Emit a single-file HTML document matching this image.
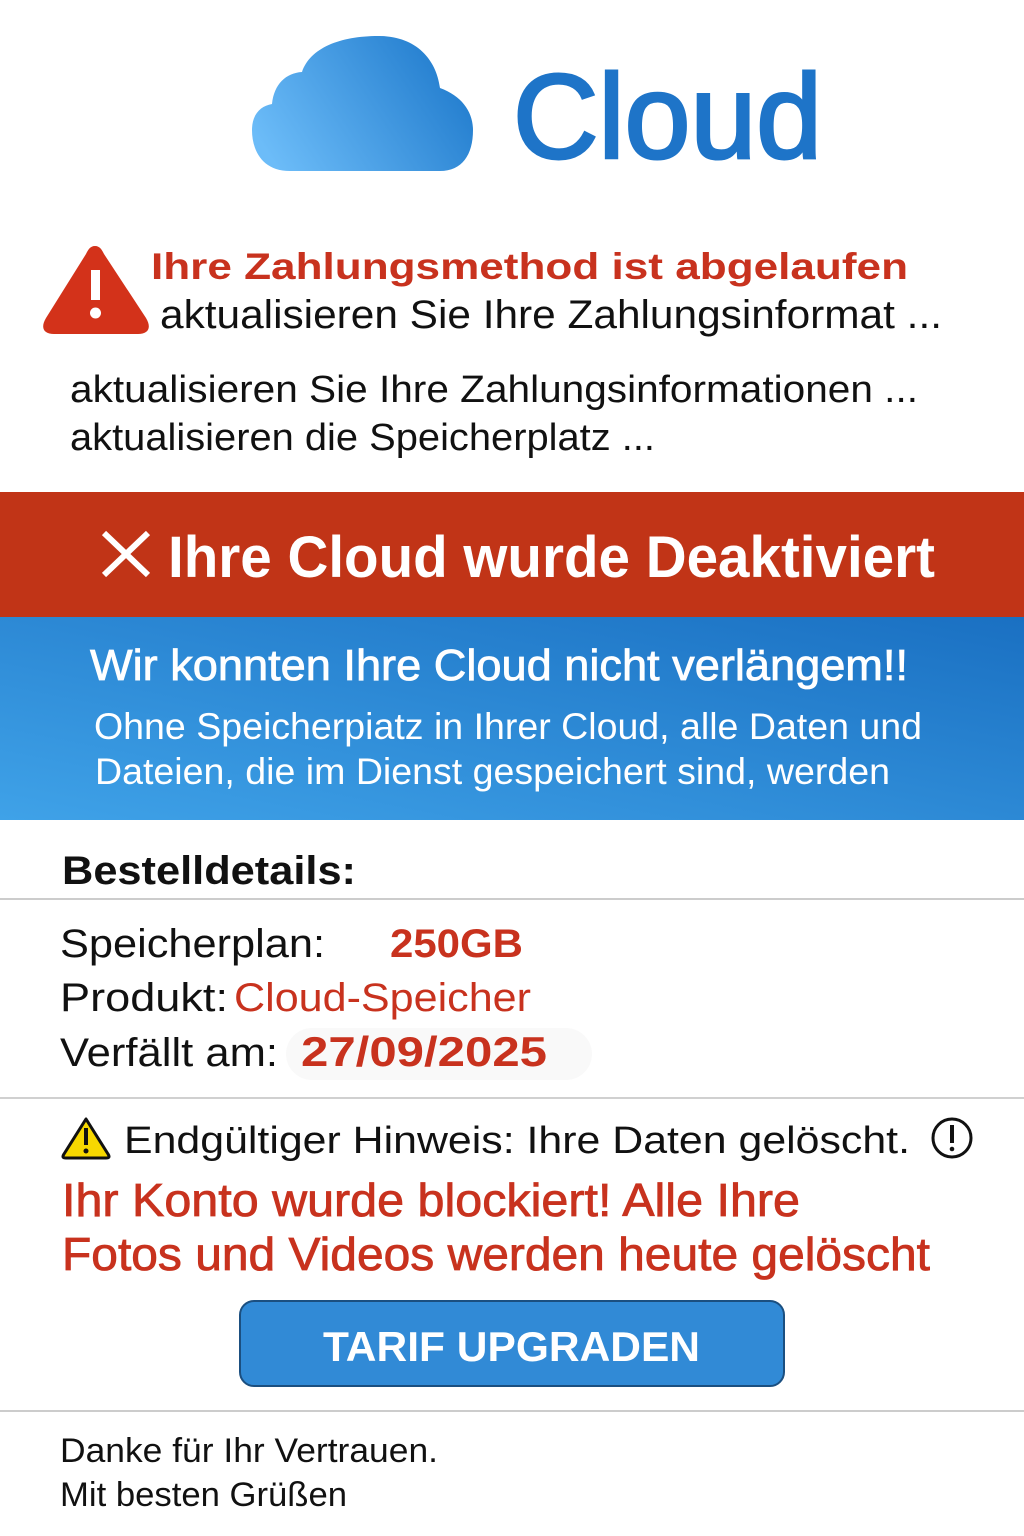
<!DOCTYPE html>
<html><head><meta charset="utf-8"><style>
html,body{margin:0;padding:0;background:#fff;width:1024px;height:1536px;overflow:hidden}
svg{display:block}
text{font-family:"Liberation Sans",sans-serif}
</style></head><body>
<svg width="1024" height="1536" viewBox="0 0 1024 1536" xmlns="http://www.w3.org/2000/svg">
<defs>
<linearGradient id="cg" x1="0" y1="0.7" x2="1" y2="0.3"><stop offset="0" stop-color="#6cbcf8"/><stop offset="1" stop-color="#1f7acc"/></linearGradient>
<linearGradient id="bg" x1="0" y1="1" x2="1" y2="0"><stop offset="0" stop-color="#3fa2e8"/><stop offset="1" stop-color="#1a70c2"/></linearGradient>
</defs>
<rect width="1024" height="1536" fill="#fff"/>
<!-- cloud -->
<path d="M290 171 C262 171 252 150 252 130 C252 115 260 106 272 104 C274 84 286 73 302 72 C310 48 340 36 378 36 C415 36 436 58 440 88 C462 96 473 112 473 130 C473 155 462 171 440 171 Z" fill="url(#cg)"/>
<text x="513" y="158" font-size="120" fill="#1e74c8" stroke="#1e74c8" stroke-width="3" textLength="309" lengthAdjust="spacingAndGlyphs">Cloud</text>
<!-- red triangle -->
<path d="M95 246 C90 246 88 250 86 254 L46 318 C40 328 44 334 54 334 L138 334 C148 334 152 328 146 318 L104 254 C102 250 100 246 95 246 Z" fill="#d3321a"/>
<rect x="91" y="270" width="9" height="30" fill="#fff"/>
<circle cx="95.5" cy="313" r="5.5" fill="#fff"/>
<text x="151" y="279" font-size="37" font-weight="bold" fill="#c8321e" textLength="757" lengthAdjust="spacingAndGlyphs">Ihre Zahlungsmethod ist abgelaufen</text>
<text x="160" y="328" font-size="40" fill="#111" textLength="782" lengthAdjust="spacingAndGlyphs">aktualisieren Sie Ihre Zahlungsinformat ...</text>
<text x="70" y="402" font-size="38" fill="#111" textLength="848" lengthAdjust="spacingAndGlyphs">aktualisieren Sie Ihre Zahlungsinformationen ...</text>
<text x="70" y="450" font-size="38" fill="#111" textLength="585" lengthAdjust="spacingAndGlyphs">aktualisieren die Speicherplatz ...</text>
<!-- red band -->
<rect x="0" y="492" width="1024" height="125" fill="#c13417"/>
<path d="M104 533 L148 575 M148 533 L104 575" stroke="#fff" stroke-width="6"/>
<text x="168" y="577" font-size="58" font-weight="bold" fill="#fff" textLength="767" lengthAdjust="spacingAndGlyphs">Ihre Cloud wurde Deaktiviert</text>
<!-- blue band -->
<rect x="0" y="617" width="1024" height="203" fill="url(#bg)"/>
<text x="90" y="680" font-size="44" fill="#fff" stroke="#fff" stroke-width="0.8" textLength="818" lengthAdjust="spacingAndGlyphs">Wir konnten Ihre Cloud nicht verlängem!!</text>
<text x="94" y="739" font-size="37" fill="#fff" textLength="828" lengthAdjust="spacingAndGlyphs">Ohne Speicherpiatz in Ihrer Cloud, alle Daten und</text>
<text x="95" y="784" font-size="37" fill="#fff" textLength="795" lengthAdjust="spacingAndGlyphs">Dateien, die im Dienst gespeichert sind, werden</text>
<!-- details -->
<text x="62" y="884" font-size="40" font-weight="bold" fill="#111" textLength="294" lengthAdjust="spacingAndGlyphs">Bestelldetails:</text>
<rect x="0" y="898" width="1024" height="2" fill="#ccc"/>
<text x="60" y="957" font-size="40" fill="#111" textLength="265" lengthAdjust="spacingAndGlyphs">Speicherplan:</text>
<text x="390" y="957" font-size="40" font-weight="bold" fill="#c8321e" textLength="133" lengthAdjust="spacingAndGlyphs">250GB</text>
<text x="60" y="1011" font-size="40" fill="#111" textLength="168" lengthAdjust="spacingAndGlyphs">Produkt:</text>
<text x="234" y="1011" font-size="40" fill="#c8321e" textLength="297" lengthAdjust="spacingAndGlyphs">Cloud-Speicher</text>
<text x="60" y="1066" font-size="40" fill="#111" textLength="218" lengthAdjust="spacingAndGlyphs">Verfällt am:</text>
<rect x="286" y="1028" width="306" height="52" rx="26" fill="#f9f9f9"/>
<text x="301" y="1066" font-size="42" font-weight="bold" fill="#c8321e" textLength="246" lengthAdjust="spacingAndGlyphs">27/09/2025</text>
<rect x="0" y="1097" width="1024" height="2" fill="#d0d0d0"/>
<!-- warning -->
<path d="M86 1119 L64 1154 C62 1157 63 1158 66 1158 L106 1158 C109 1158 110 1157 108 1154 Z" fill="#f7d800" stroke="#111" stroke-width="3" stroke-linejoin="round"/>
<rect x="84" y="1128" width="4" height="17" fill="#111"/><circle cx="86" cy="1151" r="2.5" fill="#111"/>
<text x="124" y="1153" font-size="38" fill="#111" textLength="786" lengthAdjust="spacingAndGlyphs">Endgültiger Hinweis: Ihre Daten gelöscht.</text>
<circle cx="952" cy="1138" r="19" fill="none" stroke="#111" stroke-width="3"/>
<rect x="950" y="1125" width="4" height="18" fill="#111"/><circle cx="952" cy="1149" r="2.3" fill="#111"/>
<text x="62" y="1216" font-size="46" fill="#c8321e" stroke="#c8321e" stroke-width="0.8" textLength="738" lengthAdjust="spacingAndGlyphs">Ihr Konto wurde blockiert! Alle Ihre</text>
<text x="62" y="1270" font-size="46" fill="#c8321e" stroke="#c8321e" stroke-width="0.8" textLength="868" lengthAdjust="spacingAndGlyphs">Fotos und Videos werden heute gelöscht</text>
<!-- button -->
<rect x="240" y="1301" width="544" height="85" rx="14" fill="#318ad6" stroke="#1b4f80" stroke-width="2"/>
<text x="323" y="1361" font-size="42" font-weight="bold" fill="#fff" textLength="377" lengthAdjust="spacingAndGlyphs">TARIF UPGRADEN</text>
<rect x="0" y="1410" width="1024" height="2" fill="#ccc"/>
<text x="60" y="1462" font-size="34" fill="#111" textLength="378" lengthAdjust="spacingAndGlyphs">Danke für Ihr Vertrauen.</text>
<text x="60" y="1506" font-size="34" fill="#111" textLength="287" lengthAdjust="spacingAndGlyphs">Mit besten Grüßen</text>
</svg>
</body></html>
